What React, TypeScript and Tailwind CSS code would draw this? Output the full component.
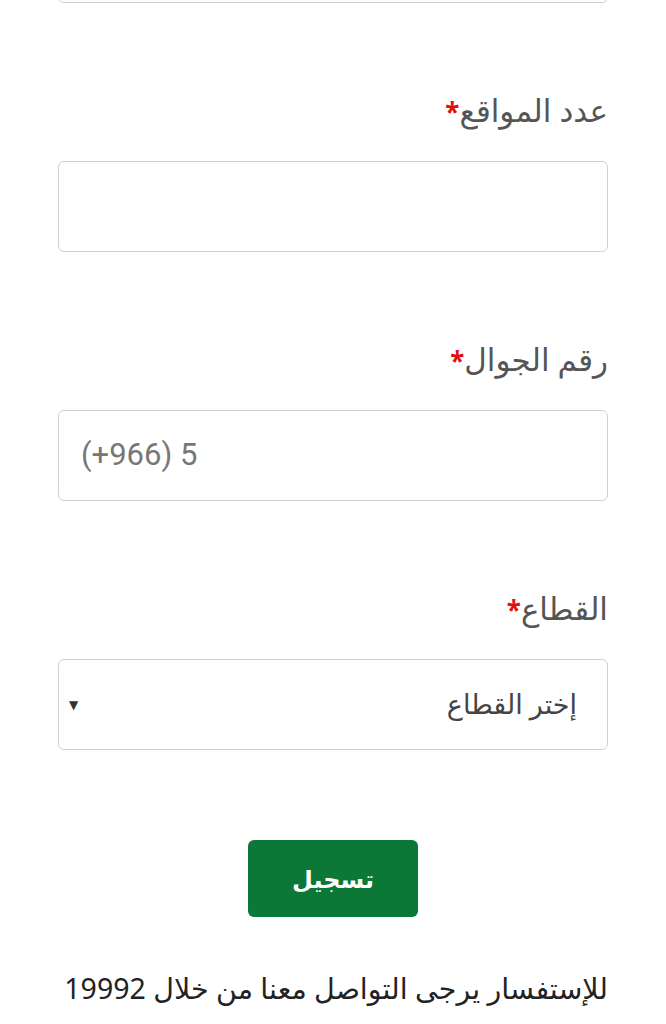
import React from 'react';

const fieldBox = 'h-[91px] w-full rounded-[6px] border border-[#cfcfcf] bg-white';

function Label({ text }: { text: string }) {
  return (
    <label className="block h-[40px] text-[31px] leading-[40px] text-[#555]">
      {text}
      <span className="text-[26px] font-bold text-[#e01010]">*</span>
    </label>
  );
}

export default function App() {
  return (
    <div
      dir="rtl"
      className="h-[1024px] w-[666px] overflow-hidden bg-white px-[58px] font-['Noto_Sans','DejaVu_Sans',sans-serif]"
    >
      <div className={`${fieldBox} -mt-[88px]`} />

      <div className="mt-[87px]">
        <Label text="عدد المواقع" />
        <input className={`${fieldBox} mt-[31px] px-5 outline-none`} />
      </div>

      <div className="mt-[87px]">
        <Label text="رقم الجوال" />
        <div className={`${fieldBox} mt-[31px] flex items-center justify-end px-[22px]`}>
          <span dir="ltr" className="font-['Roboto',sans-serif] text-[31px] text-[#777]">
            (+966) 5
          </span>
        </div>
      </div>

      <div className="mt-[87px]">
        <Label text="القطاع" />
        <div className={`${fieldBox} mt-[31px] flex items-center justify-between pr-[30px] pl-[10px]`}>
          <span className="text-[27px] text-[#444]">إختر القطاع</span>
          <span className="text-[12px] text-[#333]">▼</span>
        </div>
      </div>

      <div className="mt-[90px] flex justify-center">
        <button className="h-[77px] w-[170px] rounded-[6px] bg-[#0b7838] text-[24px] font-bold text-white">
          تسجيل
        </button>
      </div>

      <p className="mt-[51px] whitespace-nowrap text-[28.5px] leading-[40px] text-[#222]">
        للإستفسار يرجى التواصل معنا من خلال 19992
      </p>
    </div>
  );
}
